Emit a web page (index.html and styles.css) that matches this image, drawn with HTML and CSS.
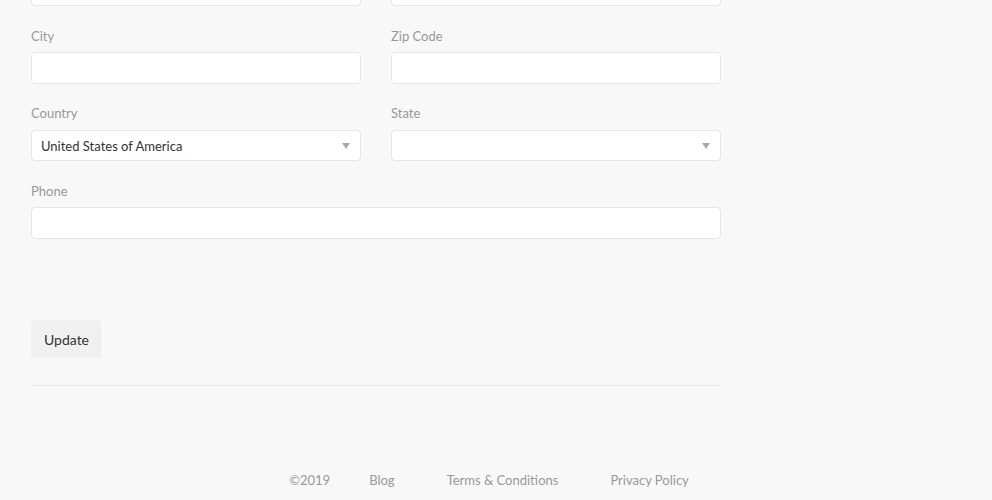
FILE: index.html
```html
<!DOCTYPE html>
<html lang="en">
<head>
<meta charset="utf-8">
<title>Account</title>
<link rel="stylesheet" href="styles.css">
</head>
<body>
<main class="page">
  <form class="form">
    <div class="row first">
      <div class="field"><input class="input" type="text" aria-label="Address"></div>
      <div class="field"><input class="input" type="text" aria-label="Apartment"></div>
    </div>
    <div class="row">
      <div class="field"><label class="label">City</label><input class="input" type="text"></div>
      <div class="field"><label class="label">Zip Code</label><input class="input" type="text"></div>
    </div>
    <div class="row selects">
      <div class="field"><label class="label">Country</label>
        <div class="select"><span class="select-value">United States of America</span><span class="caret"></span></div>
      </div>
      <div class="field"><label class="label">State</label>
        <div class="select"><span class="select-value"></span><span class="caret"></span></div>
      </div>
    </div>
    <div class="row single">
      <div class="field"><label class="label">Phone</label><input class="input" type="text"></div>
    </div>
    <div class="actions">
      <button class="btn" type="button">Update</button>
    </div>
    <hr class="divider">
  </form>
  <footer class="footer">
    <span class="foot-item copy">©2019</span>
    <a class="foot-item" href="#">Blog</a>
    <a class="foot-item" href="#">Terms &amp; Conditions</a>
    <a class="foot-item" href="#">Privacy Policy</a>
  </footer>
</main>
</body>
</html>
```
FILE: styles.css
```css
* { box-sizing: border-box; }
html, body { margin: 0; padding: 0; background: #f8f8f8; }
body {
  font-family: Lato, "Open Sans", sans-serif;
  color: #333;
  overflow: hidden;
  height: 500px;
}
.page { padding: 0 0 0 31px; }
.form {
  width: 690px;
  margin-top: -26px;
}
.row {
  display: grid;
  grid-template-columns: 330px 330px;
  column-gap: 30px;
  margin-bottom: 19px;
}
.row.first { margin-bottom: 20px; }
.row.selects { margin-bottom: 20px; }
.row.selects .label { margin-bottom: 7px; }
.row.single { grid-template-columns: 690px; }
.field { display: flex; flex-direction: column; }
.label {
  font-size: 13px;
  line-height: 20px;
  color: #999;
  margin-bottom: 6px;
}
.input, .select {
  height: 32px;
  background: #fff;
  border: 1px solid #e6e6e6;
  border-radius: 4px;
  font-family: inherit;
  font-size: 13px;
  outline: none;
  padding: 0 10px;
}
.select {
  display: flex;
  align-items: center;
  justify-content: space-between;
  height: 31px;
  padding-left: 9px;
}
.select-value { color: #333; font-size: 13px; }
.caret {
  width: 0; height: 0;
  border-left: 4px solid transparent;
  border-right: 4px solid transparent;
  border-top: 6px solid #aaa;
}
.actions { padding-top: 62px; }
.btn {
  width: 70px;
  height: 38px;
  border: none;
  border-radius: 2px;
  background: #f0f0f0;
  color: #333;
  font-family: inherit;
  font-size: 14px;
  cursor: pointer;
  padding: 0 0 0 1px;
}
.divider {
  border: none;
  border-top: 1px solid #e6e6e6;
  margin: 27px 0 0;
  height: 0;
}
.footer {
  display: flex;
  justify-content: center;
  padding: 84px 45px 0 0;
  font-size: 13px;
  line-height: 20px;
}
.foot-item {
  color: #999;
  text-decoration: none;
  margin: 0 26px;
}
.copy { margin-right: 13px; }
```
